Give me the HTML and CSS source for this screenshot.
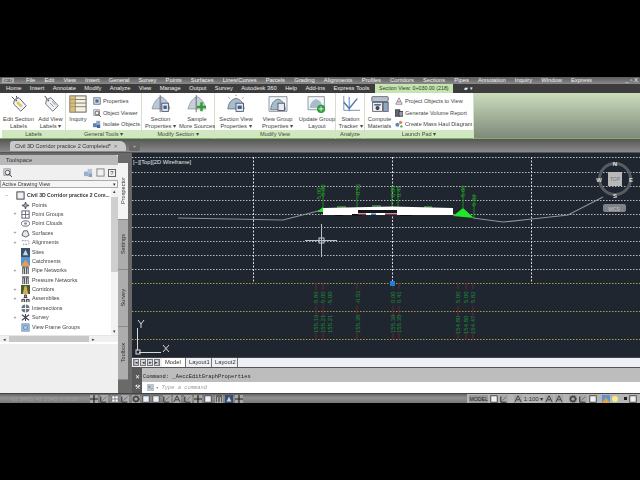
FILE: index.html
```html
<!DOCTYPE html>
<html lang="en">
<head>
<meta charset="utf-8">
<title>Civil 3D</title>
<link rel="stylesheet" href="styles.css">
</head>
<body>
<svg class="defs" width="0" height="0">
  <symbol id="tag" viewBox="0 0 20 20"><path d="M2 2l3 3M7 1l1 3" stroke="#333" fill="none"/><path d="M5 5l5-2 8 9-6 6-8-8z" fill="#f1f3f5" stroke="#556"/><path d="M9 7l5 5-2 2-5-5z" fill="#e3c84a"/><circle cx="7" cy="6" r="1" fill="#556"/></symbol>
  <symbol id="tag2" viewBox="0 0 20 20"><path d="M3 1l3 4" stroke="#333"/><path d="M5 5l5-2 8 9-6 6-8-8z" fill="#eef1f4" stroke="#667"/><path d="M9 9l4 4M11 7l4 4" stroke="#889"/><circle cx="7" cy="6" r="1" fill="#556"/></symbol>
  <symbol id="inq" viewBox="0 0 20 20"><rect x="1" y="1" width="18" height="18" fill="#f5f1de" stroke="#555"/><path d="M1 5h18M1 9h18M1 13h18M7 1v18" stroke="#777"/><rect x="1" y="1" width="6" height="18" fill="#c9a34a" opacity=".65"/></symbol>
  <symbol id="sec" viewBox="0 0 24 22"><path d="M1 17q3-12 11-15 8 3 11 15z" fill="#b8c8d6" stroke="#8a97a3"/><path d="M11 0v21" stroke="#556"/><rect x="13" y="10" width="8" height="10" fill="#dfe6ee" stroke="#445"/><rect x="15" y="13" width="4" height="4" fill="#2b5f9e"/></symbol>
  <symbol id="samp" viewBox="0 0 24 22"><path d="M1 17q3-12 11-15 8 3 11 15z" fill="#c6cfd6" stroke="#8a97a3"/><path d="M11 0v21" stroke="#556"/><path d="M16 9h3v4h4v3h-4v4h-3v-4h-4v-3h4z" fill="#2f9f2a"/></symbol>
  <symbol id="view" viewBox="0 0 24 22"><path d="M3 3l1 1M12 0v1M21 3l-1 1" stroke="#333"/><path d="M2 17q1-11 10-13 9 2 10 13z" fill="#a9bccd" stroke="#607080"/><rect x="12" y="10" width="9" height="10" fill="#e6ebf1" stroke="#445"/><rect x="14" y="13" width="5" height="4" fill="#2b5f9e"/></symbol>
  <symbol id="group" viewBox="0 0 24 22"><path d="M1 2h22v18H1z" fill="#f2f4f7" stroke="#7a8794"/><path d="M3 18q1-11 9-13 8 2 9 13z" fill="#a9bccd" stroke="#607080"/><rect x="12" y="10" width="8" height="9" fill="#e6ebf1" stroke="#445"/></symbol>
  <symbol id="upd" viewBox="0 0 24 22"><path d="M1 2h20v16H1z" fill="#f2f4f7" stroke="#7a8794"/><path d="M3 16q1-9 8-11 7 2 8 11z" fill="#a9bccd"/><circle cx="17" cy="17" r="5" fill="#2e9f3a"/><path d="M14 17h6M17 14v6" stroke="#fff"/></symbol>
  <symbol id="track" viewBox="0 0 22 20"><path d="M3 1v16h18" fill="none" stroke="#7a8794"/><path d="M3 8l6 7 9-11" fill="none" stroke="#4b6fa5" stroke-width="1.5"/><path d="M9 2v16" stroke="#3d7bd0"/></symbol>
  <symbol id="comp" viewBox="0 0 22 22"><rect x="1" y="2" width="20" height="6" rx="1" fill="#b8c2cd" stroke="#556"/><rect x="2" y="9" width="12" height="11" fill="#eef1f4" stroke="#556"/><rect x="4" y="11" width="8" height="2" fill="#4a6e9a"/><rect x="15" y="9" width="6" height="11" fill="#8fa9c4" stroke="#556"/><circle cx="8" cy="16" r="2.5" fill="#444"/></symbol>
  <symbol id="mini" viewBox="0 0 10 10"><rect x="1" y="1" width="8" height="8" fill="#dfe6ee" stroke="#55606c"/><rect x="3" y="3" width="4" height="4" fill="#3f6ea8"/></symbol>
  <symbol id="lens" viewBox="0 0 10 10"><rect x="1" y="1" width="7" height="7" fill="#f3f3f3" stroke="#889"/><circle cx="5" cy="5" r="2.5" fill="none" stroke="#444"/><path d="M7 7l3 3" stroke="#444"/></symbol>
  <symbol id="iso" viewBox="0 0 10 10"><rect x="0" y="4" width="5" height="5" fill="#5a86b8"/><rect x="4" y="1" width="5" height="5" fill="#8aa9c9"/><rect x="5" y="6" width="4" height="4" fill="#3d6ca3"/></symbol>
  <symbol id="proj" viewBox="0 0 10 10"><path d="M1 9l4-8 4 8z" fill="#eef" stroke="#778"/><path d="M3 6h4" stroke="#c33"/></symbol>
  <symbol id="vol" viewBox="0 0 10 10"><rect x="0" y="1" width="6" height="8" fill="#667" stroke="#333"/><rect x="5" y="3" width="5" height="6" fill="#99a" stroke="#333"/></symbol>
  <symbol id="haul" viewBox="0 0 10 10"><circle cx="3" cy="6" r="2.5" fill="#5a86c8"/><circle cx="7" cy="3" r="2" fill="#d88b4a"/><circle cx="8" cy="8" r="1.5" fill="#5aa85a"/></symbol>
  <symbol id="tn" viewBox="0 0 10 10"><path d="M5 1v8M1 5h8" stroke="#556" stroke-width="1.5"/><circle cx="5" cy="5" r="2" fill="#aab" stroke="#556"/></symbol>
  <symbol id="tg" viewBox="0 0 10 10"><rect x="1" y="1" width="8" height="8" fill="#fff" stroke="#556"/><path d="M5 1v8M1 5h8" stroke="#667"/></symbol>
  <symbol id="tc" viewBox="0 0 10 10"><ellipse cx="5" cy="5" rx="4.5" ry="3" fill="#fff" stroke="#556"/><circle cx="5" cy="5" r="1.5" fill="#889"/></symbol>
  <symbol id="ts" viewBox="0 0 10 10"><path d="M1 7l2-5h4l2 5-4 2z" fill="#e8e8e8" stroke="#556"/></symbol>
  <symbol id="ta" viewBox="0 0 10 10"><path d="M1 3h6q2 0 2 2t-2 2H2" fill="none" stroke="#7a8aa0" stroke-dasharray="2 1"/></symbol>
  <symbol id="tsi" viewBox="0 0 10 10"><rect width="10" height="10" fill="#38506e"/><path d="M2 8l3-6 3 6z" fill="#c7d6e5"/></symbol>
  <symbol id="tca" viewBox="0 0 10 10"><rect width="10" height="10" fill="#5d94d0"/><path d="M0 10l5-7 5 7z" fill="#e4a24a"/></symbol>
  <symbol id="tp" viewBox="0 0 10 10"><path d="M2 9V2h2v7M6 9V2h2v7M1 1h8" fill="#eee" stroke="#333"/></symbol>
  <symbol id="tco" viewBox="0 0 10 10"><rect width="10" height="10" fill="#4d5a3a"/><path d="M2 10l2-9h2l2 9z" fill="#d0b44a"/></symbol>
  <symbol id="tas" viewBox="0 0 10 10"><path d="M3 4h4M1 9V6h3v3M6 9V6h3v3M4 4V1h2v3" fill="#bbb" stroke="#333"/></symbol>
  <symbol id="tin" viewBox="0 0 10 10"><circle cx="5" cy="5" r="4.5" fill="#6a7785"/><path d="M5 0v10M0 5h10" stroke="#fff"/></symbol>
  <symbol id="tsu" viewBox="0 0 10 10"><path d="M5 1v8M1 2l8 6M9 2L1 8" stroke="#445" stroke-width="1.2"/></symbol>
  <symbol id="tv" viewBox="0 0 10 10"><rect x="1" y="1" width="8" height="8" fill="#bcd3ea" stroke="#5d86b0"/><path d="M3 3h4v4H3z" fill="none" stroke="#5d86b0"/></symbol>
  <symbol id="st" viewBox="0 0 10 10"><path d="M1 2v7h7" fill="none" stroke="#222" stroke-width="1.2"/><path d="M3 7l5-5" stroke="#666"/></symbol>
  <symbol id="sp" viewBox="0 0 10 10"><path d="M5 0v10M0 5h10" stroke="#222" stroke-width="1.5"/></symbol>
  <symbol id="sg" viewBox="0 0 10 10"><circle cx="5" cy="5" r="3" fill="none" stroke="#333" stroke-width="1.5"/><circle cx="5" cy="5" r="4.5" fill="none" stroke="#333" stroke-dasharray="1 1.4"/></symbol>
  <symbol id="sa" viewBox="0 0 10 10"><path d="M1 9l4-8 4 8M3 6h4" fill="none" stroke="#333" stroke-width="1.1"/></symbol>
  <symbol id="sb" viewBox="0 0 10 10"><rect x="1" y="1" width="8" height="8" fill="#eef1f5" stroke="#333"/></symbol>
</svg>

<div class="app">
  <div class="menu">
    <span class="logo">C3D</span>
    <div class="menu-items">
      <span>File</span><span>Edit</span><span>View</span><span>Insert</span><span>General</span><span>Survey</span><span>Points</span><span>Surfaces</span><span>Lines/Curves</span><span>Parcels</span><span>Grading</span><span>Alignments</span><span>Profiles</span><span>Corridors</span><span>Sections</span><span>Pipes</span><span>Annotation</span><span>Inquiry</span><span>Window</span><span>Express</span>
    </div>
    <span class="win">_ ▫ X</span>
  </div>

  <div class="rtabs">
    <span>Home</span><span>Insert</span><span>Annotate</span><span>Modify</span><span>Analyze</span><span>View</span><span>Manage</span><span>Output</span><span>Survey</span><span>Autodesk 360</span><span>Help</span><span>Add-ins</span><span>Express Tools</span>
    <span class="rtab-on">Section View: 0+030.00 (218)</span>
    <span class="cam">▰ ▾</span>
  </div>

  <div class="ribbon">
    <section class="panel p-labels">
      <div class="pbody">
        <div class="big w33"><svg class="bi"><use href="#tag"/></svg><span>Edit Section<br>Labels</span></div>
        <div class="big w31"><svg class="bi"><use href="#tag2"/></svg><span>Add View<br>Labels ▾</span></div>
      </div>
      <div class="ptitle">Labels</div>
    </section>
    <section class="panel p-general">
      <div class="pbody">
        <div class="big w24"><svg class="bi"><use href="#inq"/></svg><span>Inquiry<br>&nbsp;</span></div>
        <div class="stack stack-g">
          <div><svg class="si"><use href="#mini"/></svg>Properties</div>
          <div><svg class="si"><use href="#lens"/></svg>Object Viewer</div>
          <div><svg class="si"><use href="#iso"/></svg>Isolate Objects</div>
        </div>
      </div>
      <div class="ptitle">General Tools ▾</div>
    </section>
    <section class="panel p-section">
      <div class="pbody">
        <div class="big w37"><svg class="bi"><use href="#sec"/></svg><span>Section<br>Properties ▾</span></div>
        <div class="big w36"><svg class="bi"><use href="#samp"/></svg><span>Sample<br>More Sources</span></div>
      </div>
      <div class="ptitle">Modify Section ▾</div>
    </section>
    <section class="panel p-view">
      <div class="pbody">
        <div class="big w42"><svg class="bi"><use href="#view"/></svg><span>Section View<br>Properties ▾</span></div>
        <div class="big w41"><svg class="bi"><use href="#group"/></svg><span>View Group<br>Properties ▾</span></div>
        <div class="big w38"><svg class="bi"><use href="#upd"/></svg><span>Update Group<br>Layout</span></div>
      </div>
      <div class="ptitle">Modify View</div>
    </section>
    <section class="panel p-analyze">
      <div class="pbody">
        <div class="big w29"><svg class="bi"><use href="#track"/></svg><span>Station<br>Tracker ▾</span></div>
      </div>
      <div class="ptitle">Analyze</div>
    </section>
    <section class="panel p-launch">
      <div class="pbody">
        <div class="big w29"><svg class="bi"><use href="#comp"/></svg><span>Compute<br>Materials</span></div>
        <div class="stack stack-l">
          <div><svg class="si"><use href="#proj"/></svg>Project Objects to View</div>
          <div><svg class="si"><use href="#vol"/></svg>Generate Volume Report</div>
          <div><svg class="si"><use href="#haul"/></svg>Create Mass Haul Diagram</div>
        </div>
      </div>
      <div class="ptitle">Launch Pad ▾</div>
    </section>
    <div class="rfill"></div>
  </div>

  <div class="docbar">
    <div class="doctab"><span>Civil 3D Corridor practice 2 Completed*</span><b>×</b></div>
    <div class="docplus">+</div>
  </div>

  <div class="work">
    <aside class="left">
      <div class="palette">
        <div class="ptop">Toolspace</div>
        <div class="ptools">
          <svg class="tb-l"><use href="#lens"/></svg>
          <span class="tb-sp"></span>
          <svg class="tb"><use href="#iso"/></svg>
          <svg class="tb"><use href="#sb"/></svg>
          <span class="tb-q">?</span>
        </div>
        <div class="dd"><span>Active Drawing View</span><i>▾</i></div>
        <div class="treewrap">
          <ul class="tree">
            <li class="root"><em>−</em><svg class="ti"><use href="#sb"/></svg><strong>Civil 3D Corridor practice 2 Com...</strong></li>
            <li><em></em><svg class="ti"><use href="#tn"/></svg>Points</li>
            <li><em>+</em><svg class="ti"><use href="#tg"/></svg>Point Groups</li>
            <li><em></em><svg class="ti"><use href="#tc"/></svg>Point Clouds</li>
            <li><em>+</em><svg class="ti"><use href="#ts"/></svg>Surfaces</li>
            <li><em>+</em><svg class="ti"><use href="#ta"/></svg>Alignments</li>
            <li><em></em><svg class="ti"><use href="#tsi"/></svg>Sites</li>
            <li><em></em><svg class="ti"><use href="#tca"/></svg>Catchments</li>
            <li><em>+</em><svg class="ti"><use href="#tp"/></svg>Pipe Networks</li>
            <li><em></em><svg class="ti"><use href="#tp"/></svg>Pressure Networks</li>
            <li><em>+</em><svg class="ti"><use href="#tco"/></svg>Corridors</li>
            <li><em>+</em><svg class="ti"><use href="#tas"/></svg>Assemblies</li>
            <li><em></em><svg class="ti"><use href="#tin"/></svg>Intersections</li>
            <li><em>+</em><svg class="ti"><use href="#tsu"/></svg>Survey</li>
            <li><em></em><svg class="ti"><use href="#tv"/></svg>View Frame Groups</li>
          </ul>
          <div class="vscroll"><span>▴</span><div class="vthumb"></div><span>▾</span></div>
        </div>
        <div class="hscroll"><span>◂</span><div class="hthumb"></div><span>▸</span></div>
        <div class="pfoot"></div>
      </div>
      <div class="sidetabs">
        <div class="st st-on st-a"><span>Prospector</span></div>
        <div class="st st-b"><span>Settings</span></div>
        <div class="st st-c"><span>Survey</span></div>
        <div class="st st-d"><span>Toolbox</span></div>
      </div>
      <div class="strip"></div>
    </aside>

    <div class="right">
      <svg class="canvas" viewBox="132 153 508 204" width="508" height="204">
        <rect x="132" y="153" width="508" height="204" fill="#1f2630"/>
        <g class="hgrid">
          <path d="M132 157.500H640M132 172.500H640M132 186.500H640M132 200.500H640M132 214.500H640M132 227.500H640M132 241.500H640M132 255.500H640M132 269.500H640"/>
        </g>
        <path class="vgrid" d="M253.500 157V283M392.500 157V283M531.500 157V283"/>
        <path class="ygrid" d="M132 283.500H640M132 311.500H640M132 339.500H640"/>
        <path class="ground" d="M178 218L283 220L318 211L323 209M473 218L503 222L532 219L568 215L603 197"/>
        <path class="tick" d="M323 186V208M357 186V208M392 186V208M398 186V208M463 186V208M474 194V218"/>
        <path class="bump" d="M337 206h9v2h-9zM372 205h9v2h-9zM424 206h8v2h-8z"/>
        <path class="road" d="M323 208L392 206.500L453 208V215H323Z"/>
        <path class="under" d="M352 214h10v1.500h-10zM400 215h12v1h-12zM335 215h8v1h-8z"/>
        <path class="notch" d="M358 210H397V213H358Z"/>
        <path class="under-r" d="M358 213.500h8v1.500h-8zM385 213.500h12v1.500h-12z"/>
        <rect x="371" y="213.500" width="5" height="1.500" fill="#3a78c0"/>
        <path class="grn" d="M463 208L474 218L453 216ZM317 212L323 207V212Z"/>
        <path class="red" d="M316 283v7M323 283v7M357 283v6M393 283v6M399 283v6M458 283v6M466 283v6M473 283v6M316 306v10M323 306v10M357 306v10M393 306v10M399 306v10M458 306v10M473 306v10M316 333v7M323 333v7M357 333v7M393 333v7M399 333v7M458 333v7M466 333v7M473 333v7"/>
        <g class="lab-top">
          <text transform="translate(321 201) rotate(-90)">-5.00</text>
          <text transform="translate(325 198) rotate(-90)">-5.00</text>
          <text transform="translate(360 197) rotate(-90)">-0.51</text>
          <text transform="translate(395 197) rotate(-90)">0.00</text>
          <text transform="translate(401 197) rotate(-90)">0.41</text>
          <text transform="translate(465 197) rotate(-90)">5.00</text>
          <text transform="translate(476 206) rotate(-90)">5.82</text>
        </g>
        <g class="lab">
          <text transform="translate(318 305) rotate(-90)">-5.86</text>
          <text transform="translate(325 305) rotate(-90)">-5.00</text>
          <text transform="translate(332 305) rotate(-90)">-5.00</text>
          <text transform="translate(360 304) rotate(-90)">-0.51</text>
          <text transform="translate(395 303) rotate(-90)">0.00</text>
          <text transform="translate(401 303) rotate(-90)">0.41</text>
          <text transform="translate(460 303) rotate(-90)">5.00</text>
          <text transform="translate(468 303) rotate(-90)">5.00</text>
          <text transform="translate(475 303) rotate(-90)">5.82</text>
          <text transform="translate(318 333) rotate(-90)">155.16</text>
          <text transform="translate(325 333) rotate(-90)">155.21</text>
          <text transform="translate(332 333) rotate(-90)">155.21</text>
          <text transform="translate(360 333) rotate(-90)">155.35</text>
          <text transform="translate(395 333) rotate(-90)">155.39</text>
          <text transform="translate(401 333) rotate(-90)">155.35</text>
          <text transform="translate(460 334) rotate(-90)">154.80</text>
          <text transform="translate(468 334) rotate(-90)">154.80</text>
          <text transform="translate(475 334) rotate(-90)">154.47</text>
        </g>
        <text class="vpl" x="133" y="164">[−][Top][2D Wireframe]</text>
        <path class="cross" d="M305 240.500H337M321.500 224V257"/>
        <rect class="pick" x="319" y="238" width="5" height="5"/>
        <rect x="390" y="281" width="5" height="5" fill="#1f7fe0"/>
        <g class="ucs">
          <path d="M137.500 328V350M139 352.500H161M163 345l6 7M169 345l-6 7M138 320l3 4 3-4M141 324v4"/>
          <rect x="136" y="350" width="4" height="4"/>
        </g>
        <circle cx="615" cy="179" r="15.500" fill="none" stroke="#585c62" stroke-width="3"/>
        <rect x="608" y="172" width="14" height="14" fill="#b9b9b9"/>
        <text class="vc-t" x="615" y="181">TOP</text>
        <text class="vc" x="615" y="166">N</text>
        <text class="vc" x="615" y="198">S</text>
        <text class="vc" x="599" y="182">W</text>
        <text class="vc" x="631" y="182">E</text>
        <rect x="603" y="204" width="23" height="8" rx="2" fill="#7f8387"/>
        <text class="vc-w" x="614" y="210.500">WCS</text>
      </svg>
      <div class="darkline"></div>
      <div class="layouts">
        <div class="lnav"><span>|◂</span><span>◂</span><span>▸</span><span>▸|</span></div>
        <span class="lt lt-on">Model</span>
        <span class="lt">Layout1</span>
        <span class="lt">Layout2</span>
      </div>
      <div class="darkline2"></div>
      <div class="cmd">
        <div class="gutter"><span>✕</span><span class="wrench">⚒</span></div>
        <div class="cmdmain">
          <div class="hist">Command: _AeccEditGraphProperties</div>
          <div class="input"><span class="prompt">&gt;_</span><span class="caret">▾</span><span class="ph">Type a command</span></div>
        </div>
      </div>
    </div>
  </div>

  <footer class="status">
    <span class="coords">-21.3450, 41.2340, 0.0000</span>
    <div class="sicons">
      <svg class="sb"><use href="#sp"/></svg><svg class="sb"><use href="#st"/></svg><svg class="sb"><use href="#tg"/></svg><svg class="sb"><use href="#st"/></svg><svg class="sb"><use href="#sg"/></svg><svg class="sb on"><use href="#sb"/></svg><svg class="sb"><use href="#sb"/></svg><svg class="sb"><use href="#st"/></svg><svg class="sb"><use href="#sa"/></svg><svg class="sb"><use href="#st"/></svg><svg class="sb"><use href="#sp"/></svg><svg class="sb on"><use href="#sb"/></svg><svg class="sb"><use href="#tp"/></svg><svg class="sb"><use href="#tsi"/></svg><svg class="sb"><use href="#sp"/></svg>
    </div>
    <span class="sfill"></span>
    <div class="sright">
      <span class="model">MODEL</span>
      <svg class="sb"><use href="#sb"/></svg><svg class="sb"><use href="#st"/></svg>
      <span class="sgap"></span>
      <svg class="sb"><use href="#sa"/></svg><span class="scale">1:100 ▾</span>
      <svg class="sb"><use href="#sa"/></svg><svg class="sb"><use href="#sa"/></svg>
      <span class="sgap"></span>
      <svg class="sb"><use href="#sg"/></svg><svg class="sb"><use href="#st"/></svg><svg class="sb"><use href="#sb"/></svg>
      <span class="sgap"></span>
      <svg class="sb"><use href="#tca"/></svg><span class="bulb"></span>
      <span class="sgap"></span>
      <span class="dot"></span><svg class="sb"><use href="#sb"/></svg>
    </div>
  </footer>
</div>
</body>
</html>
```

FILE: styles.css
```css
* { box-sizing: border-box; }
html, body { margin: 0; padding: 0; background: #000; }
body { height: 480px; overflow: hidden; font-family: "Liberation Sans", Arial, sans-serif; font-size: 5.8px; color: #333; }
.defs { display: block; height: 0; }
.app { margin-top: 77px; width: 640px; height: 326px; display: flex; flex-direction: column; filter: blur(.35px); overflow: hidden; }

.menu { height: 7px; flex: none; display: flex; align-items: center; background: linear-gradient(#5c5c5c, #8a8a8a); color: #f0f0f0; }
.logo { width: 12px; margin-left: 2px; font-size: 4px; color: #222; background: #aaa; line-height: 5px; text-align: center; }
.menu-items { display: flex; gap: 9.1px; margin-left: 12px; line-height: 7px; white-space: nowrap; }
.win { margin-left: auto; margin-right: 2px; font-size: 6px; line-height: 7px; }

.rtabs { height: 9px; flex: none; display: flex; align-items: center; gap: 8.4px; padding-left: 6px; background: #3c3c3c; color: #efefef; white-space: nowrap; line-height: 9px; }
.rtab-on { height: 9px; width: 78px; margin-left: -3px; text-align: center; background: #c4e6ae; color: #333; font-size: 5.3px; }
.cam { font-size: 5px; margin-left: 3px; }

.ribbon { height: 46px; flex: none; display: flex; background: #fff; }
.panel { display: flex; flex-direction: column; background: #fff; border-right: 1px solid #d5dfcc; border-bottom: 1px solid #7fb25c; color: #444; }
.p-labels { width: 66px; padding-left: 2px; }
.p-general { width: 76px; }
.p-section { width: 73px; }
.p-view { width: 121px; }
.p-analyze { width: 29px; }
.p-launch { width: 109px; }
.pbody { flex: 1; display: flex; padding-top: 2px; min-height: 0; }
.ptitle { height: 8px; flex: none; line-height: 8px; font-size: 5.6px; text-align: center; background: #cfe8bf; color: #3f4a38; }
.big { display: flex; flex-direction: column; align-items: center; text-align: center; line-height: 7px; white-space: nowrap; flex: none; }
.big span { margin-top: 3px; }
.bi { width: 20px; height: 18px; display: block; }
.w24 { width: 24px; } .w29 { width: 29px; } .w31 { width: 31px; } .w33 { width: 33px; } .w36 { width: 36px; }
.w37 { width: 37px; } .w38 { width: 38px; } .w41 { width: 41px; } .w42 { width: 42px; }
.stack { display: flex; flex-direction: column; gap: 3.5px; padding-top: 2px; white-space: nowrap; font-size: 5.6px; }
.stack-g { margin-left: 3px; }
.stack-l { margin-left: 1px; }
.stack div { display: flex; align-items: center; gap: 2px; height: 8px; }
.si { width: 8px; height: 8px; flex: none; }
.rfill { flex: 1; background: linear-gradient(#c9dcbc, #7f8a7a); border-bottom: 1px solid #7fb25c; }

.docbar { height: 14px; flex: none; display: flex; align-items: flex-end; padding: 0 0 1px 10px; gap: 3px; background: linear-gradient(#565656, #8a8a8a); border-bottom: 1px solid #555; }
.doctab { width: 116px; height: 10px; display: flex; align-items: center; padding-left: 5px; background: #c9c9c9; border-radius: 3px 6px 0 0; white-space: nowrap; line-height: 10px; color: #333; font-size: 5.5px; }
.doctab b { margin-left: 3px; font-weight: normal; color: #666; }
.docplus { width: 11px; height: 9px; background: #666; border-radius: 2px; color: #bbb; text-align: center; line-height: 9px; }

.work { height: 240px; flex: none; display: flex; }
.left { width: 132px; flex: none; display: flex; background: #6a6a6a; }
.palette { width: 118px; flex: none; height: 238px; margin-top: 2px; background: #f0f0f0; display: flex; flex-direction: column; }
.ptop { height: 10px; flex: none; background: #b9b9b9; padding-left: 6px; line-height: 10px; color: #333; border-radius: 0 3px 0 0; }
.ptools { height: 15px; flex: none; display: flex; align-items: center; padding: 0 2px 0 2px; gap: 3px; }
.tb-l { width: 9px; height: 9px; margin-left: 1px; }
.tb-sp { flex: 1; }
.tb { width: 9px; height: 9px; opacity: .6; }
.tb-q { width: 8px; height: 8px; border: 1px solid #666; font-size: 6px; line-height: 6px; text-align: center; }
.dd { height: 8px; flex: none; display: flex; justify-content: space-between; background: #f5f5f5; border: 1px solid #aaa; padding: 0 1px; line-height: 6px; color: #333; font-size: 5.3px; }
.dd i { font-style: normal; font-size: 5px; }
.treewrap { height: 147px; flex: none; display: flex; background: #fff; overflow: hidden; padding-left: 3px; }
.tree { flex: 1; margin: 0; padding: 3px 0 0 0; list-style: none; white-space: nowrap; color: #444; min-width: 0; font-size: 5.4px; }
.tree li { height: 9.4px; display: flex; align-items: center; line-height: 9px; padding-left: 9px; }
.tree li.root { padding-left: 1px; }
.tree li.root em { margin-right: 3px; }
.tree li.root .ti { margin-right: 2px; }
.tree em { width: 6px; height: 6px; font-style: normal; font-size: 5px; line-height: 5px; text-align: center; color: #777; flex: none; }
.ti { width: 9px; height: 9px; flex: none; margin: 0 2px 0 3px; }
.tree strong { font-weight: bold; font-size: 5.1px; color: #333; }
.vscroll { width: 7px; flex: none; display: flex; flex-direction: column; background: #f2f2f2; font-size: 5px; line-height: 7px; text-align: center; color: #444; }
.vthumb { height: 75px; background: #cfcfcf; margin: 2px 0 auto; }
.hscroll { height: 7px; flex: none; display: flex; align-items: center; background: #f0f0f0; font-size: 5px; padding: 0 9px 0 3px; border-top: 1px solid #e6e6e6; color: #444; gap: 3px; }
.hthumb { width: 80px; height: 6px; background: #c8c8c8; }
.pfoot { flex: 1; background: #efefef; border-top: 2px solid #fff; }

.sidetabs { width: 10px; flex: none; margin-top: 10px; display: flex; flex-direction: column; }
.st { background: #adadad; border-bottom: 1px solid #8a8a8a; display: flex; align-items: center; justify-content: center; }
.st span { writing-mode: vertical-rl; transform: rotate(180deg); color: #333; font-size: 5.6px; white-space: nowrap; }
.st-on { background: #f4f4f4; }
.st-a { height: 57px; } .st-b { height: 50px; } .st-c { height: 57px; } .st-d { height: 53px; }
.strip { flex: 1; }

.right { flex: 1; display: flex; flex-direction: column; min-width: 0; }
.canvas { display: block; flex: none; }
.hgrid path { stroke: #b4b8bd; stroke-width: 1; stroke-dasharray: 1.5 1.5; fill: none; }
.vgrid { stroke: #d8dadd; stroke-dasharray: 2 1.5; fill: none; }
.ygrid { stroke: #a8a04a; stroke-dasharray: 1.5 1.5; fill: none; }
.ground { stroke: #8b929a; fill: none; stroke-width: 1.2; }
.tick { stroke: #1f8a1f; fill: none; }
.bump { fill: #3e7a3e; }
.road { fill: #fff; }
.under { fill: #0c0f13; }
.under-r { fill: #8a3040; }
.notch { fill: #14181d; }
.grn { fill: #22e52a; }
.red { stroke: #6a2630; fill: none; }
.lab-top text { fill: #2aa52a; font-size: 6px; font-family: "Liberation Sans", sans-serif; }
.lab text { fill: #1f8d3a; font-size: 6px; font-family: "Liberation Sans", sans-serif; }
.vpl { fill: #e4e6e8; font-size: 5.8px; font-family: "Liberation Sans", sans-serif; }
.cross { stroke: #b9bec4; fill: none; }
.pick { fill: none; stroke: #c9ced3; }
.ucs { stroke: #d7dadd; fill: none; }
.vc, .vc-t, .vc-w { text-anchor: middle; font-family: "Liberation Sans", sans-serif; }
.vc { fill: #e0e0e0; font-size: 6px; font-weight: bold; }
.vc-t { fill: #777; font-size: 5px; }
.vc-w { fill: #c6c8ca; font-size: 5px; }

.darkline { height: 1px; flex: none; background: #444; }
.layouts { height: 9px; flex: none; display: flex; align-items: center; background: #eef0f5; line-height: 9px; white-space: nowrap; color: #333; }
.lnav { display: flex; width: 30px; padding-left: 1px; font-size: 5px; gap: 1px; }
.lnav span { width: 6px; height: 7px; background: #d5d7db; border: 1px solid #777; line-height: 5px; text-align: center; overflow: hidden; }
.lt { padding: 0 3px; border-right: 1px solid #777; width: 26px; }
.lt-on { background: #fff; width: 24px; }
.darkline2 { height: 1px; flex: none; background: #555; }
.cmd { flex: 1; display: flex; min-height: 0; }
.gutter { width: 10px; flex: none; background: #5a5a5a; color: #fff; display: flex; flex-direction: column; align-items: center; justify-content: flex-end; font-size: 6px; line-height: 10px; padding-bottom: 1px; }
.cmdmain { flex: 1; display: flex; flex-direction: column; min-width: 0; }
.hist { height: 14px; flex: none; background: #bdbdbd; padding: 5px 0 0 1px; font-family: "Liberation Mono", monospace; font-size: 5.45px; line-height: 8px; color: #222; white-space: nowrap; }
.input { flex: 1; background: #fff; display: flex; align-items: center; font-family: "Liberation Mono", monospace; font-size: 5.45px; }
.prompt { width: 7px; height: 7px; margin-left: 5px; background: #bcc4cc; color: #333; font-size: 4px; line-height: 7px; text-align: center; }
.caret { font-size: 4px; margin: 0 2px; color: #444; }
.ph { font-style: italic; color: #999; margin-left: 1px; }

.status { height: 10px; flex: none; display: flex; align-items: center; background: linear-gradient(#666, #909090 40%, #7a7a7a); border-top: 1px solid #444; }
.coords { width: 90px; flex: none; padding-left: 10px; color: #9d9d9d; white-space: nowrap; overflow: hidden; }
.sicons { display: flex; gap: 2.4px; }
.sb { width: 8px; height: 8px; flex: none; background: #a8a8a8; }
.sb.on { background: #7ea6d6; }
.sfill { flex: 1; }
.sright { display: flex; align-items: center; gap: 1.9px; height: 9px; padding-right: 3px; background: #b5b5b5; }
.model { width: 19px; background: #9a9a9a; color: #222; font-size: 5.2px; line-height: 8px; text-align: center; margin-left: 2px; }
.sgap { width: 2px; }
.scale { color: #333; font-size: 6px; white-space: nowrap; }
.bulb { width: 6px; height: 6px; border-radius: 50%; background: #f3ee8a; }
.dot { width: 3px; height: 3px; background: #222; }
```
